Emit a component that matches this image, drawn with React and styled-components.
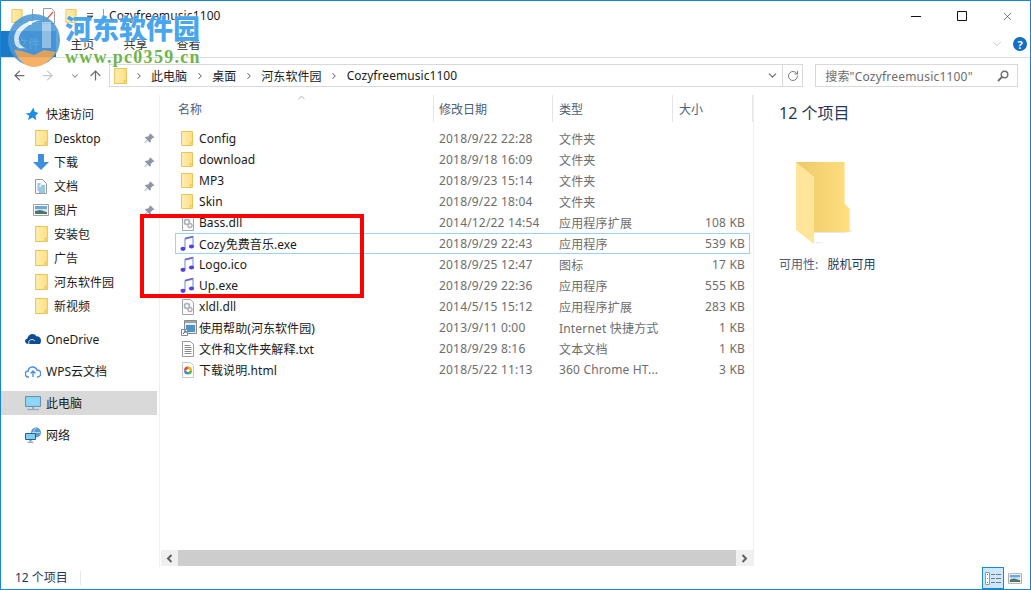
import React from "react";
import styled, { createGlobalStyle } from "styled-components";
import { ArrowLeft, ArrowRight, ArrowUp, ChevronDown, ChevronRight, ChevronUp, RotateCw, X } from "lucide-react";

const Global = createGlobalStyle`
  html, body { margin: 0; padding: 0; background: #fff; }
  body { font-family: "Noto Sans", "Noto Sans CJK SC", sans-serif; font-size: 12px; color: #1a1a1a; overflow: hidden; }
  * { box-sizing: border-box; }
  svg { display: block; flex: none; }
`;

const Win = styled.div`
  position: relative; width: 1031px; height: 590px; border: 1px solid #1883d7;
  display: flex; flex-direction: column; background: #fff; overflow: hidden;
`;
const TitleBar = styled.div`height: 30px; display: flex; align-items: center; padding-left: 10px; flex: none;`;
const Qat = styled.div`display: flex; align-items: center; gap: 9px;`;
const QatSep = styled.span`width: 1px; height: 15px; background: #a0a0a0;`;
const TitleText = styled.span`margin: -2px 0 0 5px; font-size: 12px; color: #1a1a1a; letter-spacing: .12px;`;
const WinBtns = styled.div`margin-left: auto; display: flex; height: 100%; align-items: center;`;
const WinBtn = styled.div`width: 45.5px; height: 100%; display: flex; align-items: center; justify-content: center;`;
const Tabs = styled.div`height: 26px; display: flex; align-items: center; flex: none;`;
const FileTab = styled.div`
  width: 55px; height: 26px; background: #1a79c9; color: #fff; display: flex; align-items: center; justify-content: center; padding-right: 1px;
`;
const Tab = styled.div`width: 53px; text-align: center; color: #333; margin-top: -1px;`;
const Ribbon = styled.div`margin-left: auto; display: flex; align-items: center; gap: 9px; padding-right: 3px;`;
const Help = styled.div`
  width: 14px; height: 14px; border-radius: 50%; background: #0f6fc6; color: #fff; font-weight: 700; font-size: 11px;
  display: flex; align-items: center; justify-content: center; line-height: 1;
`;
const Line = styled.div`height: 1px; background: #dadbdc; flex: none;`;
const Nav = styled.div`height: 37px; flex: none; display: flex; align-items: flex-start; padding: 6px 12px 0 0;`;
const NavBtns = styled.div`width: 108px; height: 23px; display: flex; align-items: center; padding-left: 11px;`;
const NavBtn = styled.div`width: ${p => p.$w}px; display: flex; justify-content: center; color: ${p => p.$c};`;
const AddressBox = styled.div`
  width: 695px; height: 23px; border: 1px solid #d9d9d9; display: flex; align-items: center; padding-left: 4px;
`;
const Crumb = styled.span`color: #1a1a1a; letter-spacing: .06px;`;
const CrumbSep = styled.span`width: ${p => p.$w || 25}px; display: flex; justify-content: center; color: #6d6d6d;`;
const AddrEnd = styled.div`margin-left: auto; display: flex; align-items: center; height: 100%; color: #6d6d6d;`;
const RefreshBtn = styled.div`
  width: 20px; height: 100%; margin-left: 3px; border-left: 1px solid #d9d9d9; display: flex; align-items: center; justify-content: center;
`;
const SearchBox = styled.div`
  margin-left: 12px; width: 203px; height: 23px; border: 1px solid #d9d9d9; display: flex; align-items: center; padding: 0 8px 0 9px; color: #6d6d6d; justify-content: space-between; letter-spacing: .2px;
`;
const Body = styled.div`height: 472px; flex: none; display: flex;`;
const Side = styled.div`width: 159px; flex: none; border-right: 1px solid #f0f0f0; padding-top: 7px;`;
const SideRow = styled.div`
  width: 156px; height: 24px; display: flex; align-items: center; padding-left: ${p => p.$nested ? 32 : 24}px; padding-right: 2px;
  margin-top: ${p => p.$gap || 0}px; background: ${p => p.$active ? "#d9d9d9" : "transparent"}; color: #1a1a1a;
`;
const SideIcon = styled.div`width: 21px; flex: none; display: flex; justify-content: ${p => p.$nested ? "center" : "flex-start"}; padding-right: ${p => p.$nested ? 5 : 0}px;`;
const PinWrap = styled.div`margin-left: auto;`;
const Main = styled.div`width: 593px; flex: none; display: flex; flex-direction: column;`;
const Header = styled.div`height: 27px; flex: none; display: grid; grid-template-columns: 274px 119px 120px 80px; margin-bottom: 6px; position: relative;`;
const HeadCell = styled.div`
  border-right: 1px solid #e5e5e5; padding-left: ${p => p.$pad}px; display: flex; align-items: center; color: #4c607a;
`;
const SortMark = styled.div`position: absolute; left: 136px; top: -3px; color: #6d6d6d;`;
const List = styled.div`flex: 1; padding-left: 15px;`;
const Row = styled.div`
  width: 575px; height: 21px; display: grid; grid-template-columns: 263px 120px 120px 66px; align-items: center;
  border: 1px solid ${p => p.$sel ? "#99d1ff" : "transparent"};
`;
const NameCell = styled.div`display: flex; align-items: center; color: #1a1a1a; padding-left: 5px; white-space: nowrap; letter-spacing: .06px;`;
const NameIcon = styled.div`width: 18px; flex: none; display: flex;`;
const MetaCell = styled.div`color: #6d6d6d; white-space: nowrap; letter-spacing: .18px;`;
const SizeCell = styled(MetaCell)`text-align: right;`;
const HScroll = styled.div`height: 16px; flex: none; margin: 0 0 1px 1px; display: flex; background: #f0f0f0;`;
const ScrollBtn = styled.div`width: 17px; display: flex; align-items: center; justify-content: center; color: #606060;`;
const Thumb = styled.div`flex: 1; background: #cdcdcd;`;
const Details = styled.div`flex: 1; border-left: 1px solid #f0f0f0; padding: 7px 0 0 25px;`;
const DetTitle = styled.div`font-size: 16px; line-height: 22px; color: #1e395b;`;
const BigFolder = styled.div`margin: 38px 0 0 17px;`;
const DetLabel = styled.div`margin-top: 9px; color: #4c607a; white-space: pre; span { color: #1e395b; }`;
const Status = styled.div`height: 22px; flex: none; display: flex; align-items: center; padding-left: 14px; color: #1e395b;`;
const StatusText = styled.span`margin-top: -2px;`;
const StatusSep = styled.span`width: 1px; height: 14px; background: #e8e8e8; margin-left: 12px;`;
const Views = styled.div`margin-left: auto; display: flex; align-items: center; height: 100%; padding-right: 8px; gap: 4px;`;
const ViewOn = styled.div`
  width: 22px; height: 22px; background: #cce8ff; border: 1px solid #1a8ad6; display: flex; align-items: center; justify-content: center;
`;
const Overlay = styled.div`
  position: absolute; left: 139px; top: 213px; width: 224px; height: 84px; border: 4px solid #ff0000; pointer-events: none;
`;
const Mark = styled.div`position: absolute; left: 6px; top: 13px; pointer-events: none;`;
const MarkCn = styled.div`
  position: absolute; left: 58px; top: -3px; font-family: "Noto Sans CJK SC", sans-serif; font-weight: 900; font-size: 27px; line-height: 34px;
  color: rgba(40, 150, 235, .85); white-space: nowrap; text-shadow: 0 0 2px #fff;
`;
const MarkUrl = styled.div`
  position: absolute; left: 58px; top: 33px; font-family: "Liberation Serif", serif; font-weight: 700; font-size: 18px; line-height: 20px;
  color: #6fb54d; white-space: nowrap; letter-spacing: 1.3px; text-shadow: 0 0 2px #fff;
`;
const MusicSvg = styled.svg`margin-left: -1px;`;
const LogoSvg = styled.svg`opacity: .88;`;

const Folder = ({ w = 12, h = 15 }) => (
  <svg width={w} height={h} viewBox="0 0 12 15">
    <defs><linearGradient id="fg" x1="0" x2="1"><stop offset="0" stopColor="#ffeeb0" /><stop offset="1" stopColor="#fddf85" /></linearGradient></defs>
    <path d="M.5.5h11v14H.5z" fill="url(#fg)" stroke="#ecc558" />
    <path d="M9.5 14.5v-3h2" fill="none" stroke="#ecc558" />
  </svg>
);
const Music = () => (
  <MusicSvg width="15" height="17" viewBox="0 0 15 17">
    <path d="M5 13V4l8-2v9" fill="none" stroke="#9fb4e8" strokeWidth="1.6" />
    <path d="M5 3.500 13 1.500" stroke="#6a5fd8" strokeWidth="1.800" />
    <ellipse cx="3" cy="13.800" rx="2.600" ry="2.100" fill="#5a3fe0" />
    <ellipse cx="11.500" cy="11.500" rx="2.600" ry="2.100" fill="#5a3fe0" />
  </MusicSvg>
);
const Dll = () => (
  <svg width="14" height="16" viewBox="0 0 14 16">
    <path d="M1.5.5h8l3 3v12h-11z" fill="#fbfbfb" stroke="#a5a5a5" />
    <circle cx="6" cy="7" r="2.5" fill="none" stroke="#9fb1c4" strokeWidth="1.6" />
    <circle cx="9" cy="10.5" r="2" fill="none" stroke="#b0b0b0" strokeWidth="1.4" />
  </svg>
);
const QatDoc = () => (
  <svg width="14" height="16" viewBox="0 0 14 16">
    <path d="M1.5.5h8l3 3v12h-11z" fill="#fff" stroke="#9a9a9a" />
    <path d="M4 12 11 4" stroke="#e0573a" strokeWidth="1.200" />
  </svg>
);
const ShortcutIco = () => (
  <svg width="17" height="16" viewBox="0 0 17 16">
    <path d="M3.5.5h12v13h-12z" fill="#e9eef2" stroke="#888" />
    <path d="M4 1h11v2H4z" fill="#9aa6ad" />
    <path d="M5 5h9v7H5z" fill="#4f94c9" />
    <path d="M.5 9.5h6v6h-6z" fill="#fff" stroke="#888" />
    <path d="M2 14l2.5-3M3 11h2v2" fill="none" stroke="#1f5fb0" />
  </svg>
);
const Txt = () => (
  <svg width="14" height="16" viewBox="0 0 14 16">
    <path d="M1.5.5h8l3 3v12h-11z" fill="#fff" stroke="#9a9a9a" />
    <path d="M3.5 4.5h6M3.5 6.5h7M3.5 8.5h7M3.5 10.5h7M3.5 12.5h7" stroke="#8a8a8a" />
  </svg>
);
const Html = () => (
  <svg width="14" height="16" viewBox="0 0 14 16">
    <path d="M1.5.5h8l3 3v12h-11z" fill="#fff" stroke="#c8c8c8" />
    <path d="M7 4.5a4 4 0 0 1 4 4H7z" fill="#f4b400" />
    <path d="M11 8.500a4 4 0 0 1-4 4V8.500z" fill="#4caf50" />
    <path d="M7 12.500a4 4 0 0 1-4-4h4z" fill="#3f83e8" />
    <path d="M3 8.500a4 4 0 0 1 4-4v4z" fill="#e8453c" />
    <circle cx="7" cy="8.500" r="1.600" fill="#fff" />
  </svg>
);
const Pin = () => (
  <svg width="11" height="11" viewBox="0 0 11 11">
    <path d="M6.500.5l4 4-1 .6-.8-.2-2 2 .1 2-.8.8-2.400-2.400L1 9.900.5 9.500 3.100 6.800.8 4.500l.8-.8 2 .1 2-2-.2-.8z" fill="#8b98a6" />
  </svg>
);
const Star = () => (
  <svg width="14" height="14" viewBox="0 0 14 14">
    <path d="M8.500.5l1.200 4.200L13.500 6l-3 2.600.8 4.600-3.800-2.600L3 13l1.200-4.300L.5 6.500l4.400-.5z" fill="#1c8ee6" />
  </svg>
);
const Down = () => (
  <svg width="16" height="16" viewBox="0 0 16 16">
    <path d="M5 0h6v8h5l-8 8-8-8h5z" fill="#3d8ee0" />
  </svg>
);
const DocIco = () => (
  <svg width="12" height="15" viewBox="0 0 12 15">
    <path d="M.5.5h7l4 4v10H.5z" fill="#fafafa" stroke="#9a9a9a" />
    <path d="M2.500 5h3M6 7h4M2.500 7h2M2.500 9h7.500M2.500 11h7.500M4 13h6" stroke="#3a94cf" />
  </svg>
);
const Pic = ({ w = 16, h = 12 }) => (
  <svg width={w} height={h} viewBox="0 0 16 12">
    <path d="M.5.500h15v11H.5z" fill="#fff" stroke="#a0a0a0" />
    <path d="M2 2h12v3H2z" fill="#6ba7e0" />
    <path d="M2 5h12v2H2z" fill="#d6e4ee" />
    <path d="M2 7l5-1 7 2v2H2z" fill="#4f7668" />
  </svg>
);
const OneDrive = () => (
  <svg width="16" height="10" viewBox="0 0 16 10">
    <path d="M3.500 10C1.500 10 0 8.800 0 7.300 0 6 1 5 2.200 4.800 3 2 5 0 7.500 0c1.700 0 3.100.9 3.800 2.300 2.500-.3 4.700 1.600 4.700 4.100 0 1-.3 2.500-1 3.600z" fill="#0f4e94" />
    <path d="M4 10C3 8 4.500 5.500 7 5.500c1 0 2 .5 2.800 1.300" fill="none" stroke="#fff" strokeWidth=".9" />
  </svg>
);
const WpsCloud = () => (
  <svg width="16" height="13" viewBox="0 0 16 13">
    <path d="M4 12H3.500a3 3 0 0 1-.4-6A4.600 4.600 0 0 1 12 5a3.500 3.500 0 0 1 .5 7H12" fill="none" stroke="#4a8fe8" strokeWidth="1.400" />
    <path d="M5.500 8.500 8 6l2.500 2.500M8 6v6" fill="none" stroke="#4a8fe8" strokeWidth="1.400" />
  </svg>
);
const Monitor = () => (
  <svg width="16" height="15" viewBox="0 0 16 15">
    <path d="M.5.500h15v10H.5z" fill="#7fd0f5" stroke="#5a7f99" strokeWidth=".8" />
    <path d="M1.500 1.500h13v8h-13z" fill="#8ed6f8" />
    <path d="M7 11h2v2H7z" fill="#9ab" />
    <path d="M2 13.500h12" stroke="#8faabb" strokeWidth="1.300" />
  </svg>
);
const Net = () => (
  <svg width="17" height="16" viewBox="0 0 17 16">
    <circle cx="11" cy="5.500" r="5" fill="#5d9ad0" />
    <path d="M11 1c-3 2-3 7 0 9M7 5.500h8" fill="none" stroke="#cde5f5" strokeWidth=".8" />
    <path d="M.5 6.500h10v6H.5z" fill="#7fd0f5" stroke="#2f5f8a" />
    <path d="M4.500 13h2v1.500h-2z" fill="#7a8a99" />
    <path d="M2.500 15.200h6" stroke="#7a8a99" />
  </svg>
);
const DetailsIco = () => (
  <svg width="16" height="13" viewBox="0 0 16 13">
    <path d="M.5.500h4v12h-4z" fill="#fff" stroke="#999" />
    <path d="M2 2h1v1H2z" fill="#555" /><path d="M2 6h1v1H2z" fill="#3a86d0" /><path d="M2 10h1v1H2z" fill="#c33" />
    <path d="M6 2.500h4M11 2.500h5M6 6.500h4M11 6.500h5M6 10.500h4M11 10.500h5" stroke="#777" />
  </svg>
);
const BigFolderIcon = () => (
  <svg width="56" height="84" viewBox="0 0 56 84">
    <defs>
      <linearGradient id="b1" x1="0" x2="1"><stop offset="0" stopColor="#edc968" /><stop offset="1" stopColor="#ffdf80" /></linearGradient>
    </defs>
    <path d="M18 68h38l1 1-8 2H18z" fill="#e8e8e8" />
    <path d="M18 80l4 2 6-2z" fill="#eee" />
    <path d="M0 0h49v42l5 5v23H17z" fill="url(#b1)" />
    <path d="M49 0v42l5 5v23h-1V47l-5-5V1z" fill="#ffeeb0" />
    <path d="M0 0l18 15v67L0 68z" fill="#ffe599" />
    <path d="M0 0l18 15v44l-1 2v-46z" fill="#fff0b8" opacity=".4" />
  </svg>
);
const Logo = () => (
  <LogoSvg width="56" height="54" viewBox="0 0 56 54">
    <circle cx="27" cy="26" r="26" fill="#4b98d8" />
    <path d="M7 36c4 10 12 17 20 17s16-6 22-15l-12-2-10 5-12-4z" fill="#f6a752" />
    <path d="M9 32C2 18 16 6 33 6c-9 3-19 9-21 17-1 5 1 9 6 11-4 1-7 0-9-2z" fill="#e6f1fa" />
    <path d="M35 8h9v26h-9z" fill="#e6f1fa" opacity=".55" />
    <circle cx="23" cy="9" r="2" fill="#fff" />
  </LogoSvg>
);

const quick = [
  { icon: <Folder w={13} h={16} />, t: "Desktop", pin: 1 },
  { icon: <Down />, t: "下载", pin: 1 },
  { icon: <DocIco />, t: "文档", pin: 1 },
  { icon: <Pic />, t: "图片", pin: 1 },
  { icon: <Folder w={13} h={16} />, t: "安装包" },
  { icon: <Folder w={13} h={16} />, t: "广告" },
  { icon: <Folder w={13} h={16} />, t: "河东软件园" },
  { icon: <Folder w={13} h={16} />, t: "新视频" },
];
const files = [
  [<Folder />, "Config", "2018/9/22 22:28", "文件夹", ""],
  [<Folder />, "download", "2018/9/18 16:09", "文件夹", ""],
  [<Folder />, "MP3", "2018/9/23 15:14", "文件夹", ""],
  [<Folder />, "Skin", "2018/9/22 18:04", "文件夹", ""],
  [<Dll />, "Bass.dll", "2014/12/22 14:54", "应用程序扩展", "108 KB"],
  [<Music />, "Cozy免费音乐.exe", "2018/9/29 22:43", "应用程序", "539 KB", true],
  [<Music />, "Logo.ico", "2018/9/25 12:47", "图标", "17 KB"],
  [<Music />, "Up.exe", "2018/9/29 22:36", "应用程序", "555 KB"],
  [<Dll />, "xldl.dll", "2014/5/15 15:12", "应用程序扩展", "283 KB"],
  [<ShortcutIco />, "使用帮助(河东软件园)", "2013/9/11 0:00", "Internet 快捷方式", "1 KB"],
  [<Txt />, "文件和文件夹解释.txt", "2018/9/29 8:16", "文本文档", "1 KB"],
  [<Html />, "下载说明.html", "2018/5/22 11:13", "360 Chrome HT...", "3 KB"],
];
const crumbs = ["此电脑", "桌面", "河东软件园", "Cozyfreemusic1100"];

export default function App() {
  return (
    <Win>
      <Global />
      <TitleBar>
        <Qat>
          <Folder w={12} h={14} />
          <QatSep />
          <QatDoc />
          <Folder w={12} h={14} />
          <svg width="8" height="8" viewBox="0 0 8 8"><path d="M1 1.500h6M1 4h6L4 7z" stroke="#333" fill="#333" strokeWidth=".8" /></svg>
          <QatSep />
        </Qat>
        <TitleText>Cozyfreemusic1100</TitleText>
        <WinBtns>
          <WinBtn><svg width="10" height="10" viewBox="0 0 10 10"><path d="M0 5.500h10" stroke="#111" /></svg></WinBtn>
          <WinBtn><svg width="10" height="10" viewBox="0 0 10 10"><path d="M.5.500h9v9h-9z" fill="none" stroke="#111" /></svg></WinBtn>
          <WinBtn><X size={13} strokeWidth={1} color="#111" /></WinBtn>
        </WinBtns>
      </TitleBar>
      <Tabs>
        <FileTab>文件</FileTab>
        <Tab>主页</Tab>
        <Tab>共享</Tab>
        <Tab>查看</Tab>
        <Ribbon>
          <ChevronDown size={14} strokeWidth={1} color="#a0a0a0" />
          <Help>?</Help>
        </Ribbon>
      </Tabs>
      <Line />
      <Nav>
        <NavBtns>
          <NavBtn $w={16} $c="#6d6d6d"><ArrowLeft size={15} strokeWidth={2} /></NavBtn>
          <NavBtn $w={44} $c="#c8c8c8"><ArrowRight size={15} strokeWidth={2} /></NavBtn>
          <NavBtn $w={16} $c="#8a8a8a"><ChevronDown size={10} strokeWidth={2.5} /></NavBtn>
          <NavBtn $w={28} $c="#6d6d6d"><ArrowUp size={15} strokeWidth={2} /></NavBtn>
        </NavBtns>
        <AddressBox>
          <Folder w={13} h={16} />
          <CrumbSep $w={24}><ChevronRight size={10} strokeWidth={2.5} /></CrumbSep>
          {crumbs.map((c, i) => (
            <React.Fragment key={c}>
              <Crumb>{c}</Crumb>
              {i < crumbs.length - 1 && <CrumbSep><ChevronRight size={10} strokeWidth={2.5} /></CrumbSep>}
            </React.Fragment>
          ))}
          <AddrEnd>
            <ChevronDown size={13} strokeWidth={2.2} />
            <RefreshBtn><RotateCw size={12} strokeWidth={1.8} /></RefreshBtn>
          </AddrEnd>
        </AddressBox>
        <SearchBox>
          <span>搜索"Cozyfreemusic1100"</span>
          <svg width="12" height="12" viewBox="0 0 12 12"><circle cx="7.500" cy="4.500" r="3.300" fill="none" stroke="#6d6d6d" strokeWidth="1.400" /><path d="M5 7 1 11" stroke="#6d6d6d" strokeWidth="1.800" /></svg>
        </SearchBox>
      </Nav>
      <Body>
        <Side>
          <SideRow><SideIcon><Star /></SideIcon>快速访问</SideRow>
          {quick.map(q => (
            <SideRow key={q.t} $nested>
              <SideIcon $nested>{q.icon}</SideIcon>{q.t}
              {q.pin && <PinWrap><Pin /></PinWrap>}
            </SideRow>
          ))}
          <SideRow $gap={9}><SideIcon><OneDrive /></SideIcon>OneDrive</SideRow>
          <SideRow $gap={8}><SideIcon><WpsCloud /></SideIcon>WPS云文档</SideRow>
          <SideRow $gap={8} $active><SideIcon><Monitor /></SideIcon>此电脑</SideRow>
          <SideRow $gap={8}><SideIcon><Net /></SideIcon>网络</SideRow>
        </Side>
        <Main>
          <Header>
            <HeadCell $pad={18}>名称</HeadCell>
            <HeadCell $pad={5}>修改日期</HeadCell>
            <HeadCell $pad={6}>类型</HeadCell>
            <HeadCell $pad={6}>大小</HeadCell>
            <SortMark><ChevronUp size={11} strokeWidth={1.2} /></SortMark>
          </Header>
          <List>
            {files.map(f => (
              <Row key={f[1]} $sel={f[5]}>
                <NameCell><NameIcon>{f[0]}</NameIcon>{f[1]}</NameCell>
                <MetaCell>{f[2]}</MetaCell>
                <MetaCell>{f[3]}</MetaCell>
                <SizeCell>{f[4]}</SizeCell>
              </Row>
            ))}
          </List>
          <HScroll>
            <ScrollBtn><svg width="7" height="9" viewBox="0 0 7 9"><path d="M5.500 1 2 4.500 5.500 8" fill="none" stroke="#606060" strokeWidth="2" /></svg></ScrollBtn>
            <Thumb />
            <ScrollBtn><svg width="7" height="9" viewBox="0 0 7 9"><path d="M1.500 1 5 4.500 1.500 8" fill="none" stroke="#606060" strokeWidth="2" /></svg></ScrollBtn>
          </HScroll>
        </Main>
        <Details>
          <DetTitle>12 个项目</DetTitle>
          <BigFolder><BigFolderIcon /></BigFolder>
          <DetLabel>可用性:   <span>脱机可用</span></DetLabel>
        </Details>
      </Body>
      <Status>
        <StatusText>12 个项目</StatusText>
        <StatusSep />
        <Views>
          <ViewOn><DetailsIco /></ViewOn>
          <Pic w={14} h={11} />
        </Views>
      </Status>
      <Mark>
        <Logo />
        <MarkCn>河东软件园</MarkCn>
        <MarkUrl>www.pc0359.cn</MarkUrl>
      </Mark>
      <Overlay />
    </Win>
  );
}
